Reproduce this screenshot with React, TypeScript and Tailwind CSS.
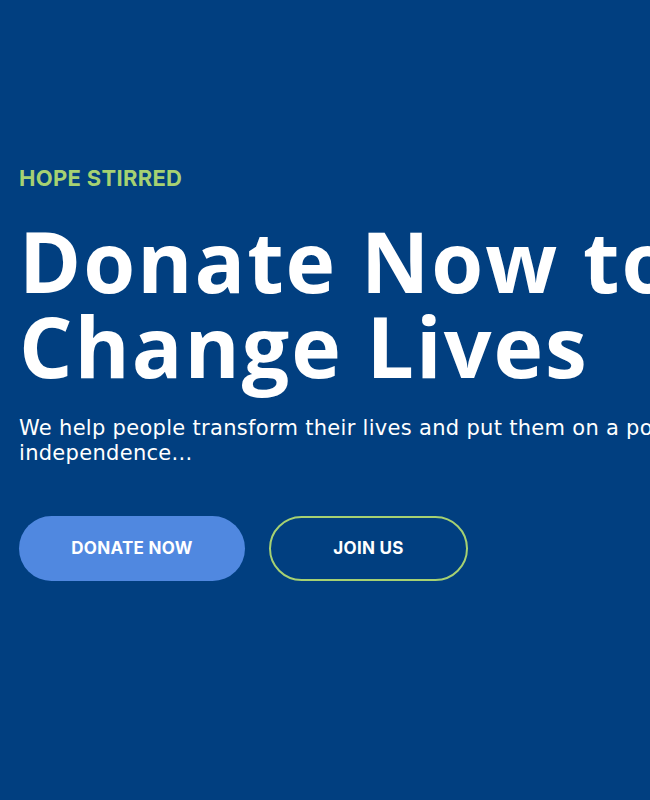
export default function App() {
  return (
    <section className="h-[800px] w-full overflow-hidden bg-[#013f80] text-white">
      <div className="w-[900px] px-[19px] pt-[166px]">
        <div className="text-[22px] font-bold uppercase leading-6 tracking-[0.3px] text-[#a6d172] [font-family:Inter,sans-serif]">
          Hope Stirred
        </div>
        <h1 className="mt-[28px] text-[84px] font-bold leading-[85px] tracking-[2px] [font-family:'Open_Sans',sans-serif]">
          Donate Now to
          <br />
          Change Lives
        </h1>
        <p className="mt-[28px] w-[860px] text-[21px] leading-[25px] tracking-[0.3px] [font-family:'DejaVu_Sans',sans-serif]">
          We help people transform their lives and put them on a positive path to independence...
        </p>
        <div className="mt-[50px] flex gap-[24px] [font-family:Inter,sans-serif]">
          <button className="flex h-[65px] w-[226px] items-center justify-center rounded-full bg-[#5088e0] text-[17px] font-bold uppercase tracking-[0.3px] text-white">
            Donate Now
          </button>
          <button className="flex h-[65px] w-[199px] items-center justify-center rounded-full border-2 border-[#a6d172] text-[17px] font-bold uppercase tracking-[0.3px] text-white">
            Join Us
          </button>
        </div>
      </div>
    </section>
  );
}
